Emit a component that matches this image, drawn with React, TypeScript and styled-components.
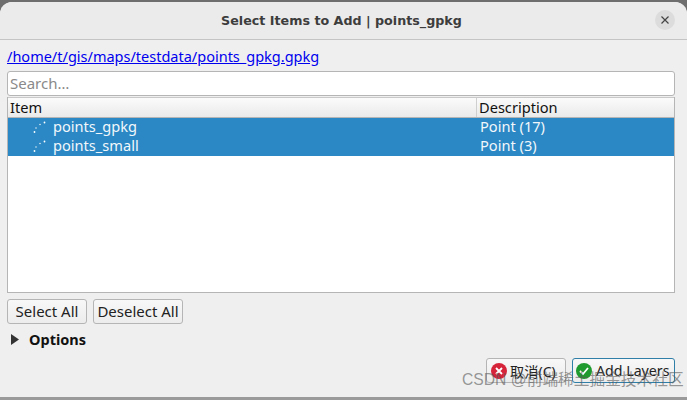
import React from "react";
import styled, { createGlobalStyle } from "styled-components";

const Global = createGlobalStyle`
  html, body { margin: 0; padding: 0; background: #6e6e6e; }
  #root { width: 687px; height: 400px; overflow: hidden; }
`;

const Screen = styled.div`
  position: relative;
  width: 687px;
  height: 400px;
  padding-top: 2px;
  box-sizing: border-box;
  font-family: "Noto Sans", "Noto Sans CJK SC", sans-serif;
  font-size: 14.6px;
  color: #1c1c1c;
  overflow: hidden;
`;

const Window = styled.div`
  width: 687px;
  height: 395px;
  background: #efefef;
  border-radius: 12px 12px 0 0;
  display: flex;
  flex-direction: column;
  box-sizing: border-box;
`;

const TitleBar = styled.div`
  position: relative;
  height: 37px;
  flex: none;
  box-sizing: content-box;
  padding-right: 4px;
  background: #ebebeb;
  border-bottom: 1px solid #c4c4c4;
  border-radius: 12px 12px 0 0;
  display: flex;
  align-items: center;
  justify-content: center;
  font-family: "DejaVu Sans", sans-serif;
  font-size: 12.7px;
  font-weight: 700;
  color: #3d3d3d;
`;

const CloseButton = styled.div`
  position: absolute;
  right: 12px;
  top: 8px;
  width: 20px;
  height: 20px;
  border-radius: 50%;
  background: #dcdcdc;
  display: flex;
  align-items: center;
  justify-content: center;
`;

const Body = styled.div`
  flex: 1;
  display: flex;
  flex-direction: column;
  padding: 6px 12px 0 7px;
`;

const PathLink = styled.a`
  height: 25px;
  flex: none;
  line-height: 21px;
  color: #0000ee;
  text-decoration: underline;
  font-size: 14.5px;
`;

const SearchInput = styled.div`
  height: 25px;
  flex: none;
  box-sizing: border-box;
  background: #fff;
  border: 1px solid #b5b5b5;
  border-radius: 3px;
  padding-left: 2px;
  line-height: 22px;
  color: #8a8a8a;
  font-size: 15px;
`;

const Table = styled.div`
  height: 196px;
  margin-top: 1px;
  flex: none;
  box-sizing: border-box;
  background: #fff;
  border: 1px solid #b5b5b5;
  border-top: none;
  display: flex;
  flex-direction: column;
`;

const Row = styled.div<{ $head?: boolean }>`
  display: grid;
  grid-template-columns: 469px 1fr;
  height: ${(p) => (p.$head ? "21px" : "19px")};
  line-height: ${(p) => (p.$head ? "19px" : "17px")};
  flex: none;
  box-sizing: border-box;
  ${(p) =>
    p.$head
      ? "background: linear-gradient(#fbfbfb, #eaeaea); border-bottom: 1px solid #b5b5b5; border-top: 1px solid #c9c9c9; color: #111;"
      : "background: #2b88c4; color: #f2f7fb; padding-bottom: 2px;"}
`;

const HeadCell = styled.div`
  padding-left: 2px;
  &:first-child { border-right: 1px solid #cfcfcf; }
`;

const ItemCell = styled.div`
  display: flex;
  align-items: center;
  padding-left: 25px;
  gap: 6px;
`;

const DescCell = styled.div`
  padding-left: 3px;
`;

const ButtonRow = styled.div`
  display: flex;
  gap: 6px;
  margin-top: 6px;
`;

const Button = styled.div<{ $w: number }>`
  width: ${(p) => p.$w}px;
  height: 25px;
  box-sizing: border-box;
  padding-bottom: 2px;
  border: 1px solid #b5b5b5;
  border-radius: 3px;
  background: linear-gradient(#f8f8f8, #ececec);
  display: flex;
  align-items: center;
  justify-content: center;
  color: #222;
  font-size: 15px;
  white-space: nowrap;
`;

const DialogButton = styled(Button)<{ $primary?: boolean }>`
  justify-content: flex-start;
  gap: ${(p) => (p.$primary ? "3px" : "2px")};
  padding-left: ${(p) => (p.$primary ? "2px" : "3px")};
  padding-bottom: 0;
  font-size: 14.2px;
  border-color: ${(p) => (p.$primary ? "#2f7fa8" : "#b5b5b5")};
`;

const OptionsRow = styled.div`
  display: flex;
  align-items: center;
  height: 18px;
  margin-top: 6px;
  padding-left: 4px;
  gap: 10px;
  font-weight: 700;
  font-size: 14.5px;
  color: #111;
`;

const Footer = styled.div`
  display: flex;
  justify-content: flex-end;
  gap: 6px;
  margin-top: 10px;
`;

const Watermark = styled.div`
  position: absolute;
  left: 462px;
  top: 369px;
  font-family: "Liberation Sans", "Noto Sans CJK SC", sans-serif;
  font-size: 15.7px;
  line-height: 22px;
  color: rgba(90, 90, 90, 0.62);
  white-space: nowrap;
`;

const BottomEdge = styled.div`
  height: 3px;
  background: #9a9a9a;
`;

const Points = () => (
  <svg width="14" height="14" viewBox="0 0 14 14" fill="#fff">
    <circle cx="1.5" cy="12" r="0.9" />
    <circle cx="3" cy="8" r="0.7" />
    <circle cx="7" cy="4.5" r="0.7" />
    <circle cx="11.5" cy="2.5" r="0.9" />
  </svg>
);

const StatusIcon = ({ color, check }: { color: string; check?: boolean }) => (
  <svg width="18" height="18" viewBox="0 0 18 18">
    <circle cx="9" cy="9" r="8" fill={color} />
    {check ? (
      <path d="M5 9l3 3 5-6" stroke="#fff" strokeWidth="1.8" fill="none" />
    ) : (
      <path d="M6 6l6 6M12 6l-6 6" stroke="#fff" strokeWidth="1.8" fill="none" />
    )}
  </svg>
);

export default function App() {
  return (
    <>
      <Global />
      <Screen>
        <Window>
          <TitleBar>
            Select Items to Add | points_gpkg
            <CloseButton>
              <svg width="10" height="10" viewBox="0 0 10 10">
                <path d="M1.5 1.5l7 7M8.5 1.5l-7 7" stroke="#444" strokeWidth="1.2" fill="none" />
              </svg>
            </CloseButton>
          </TitleBar>
          <Body>
            <PathLink>/home/t/gis/maps/testdata/points_gpkg.gpkg</PathLink>
            <SearchInput>Search…</SearchInput>
            <Table>
              <Row $head>
                <HeadCell>Item</HeadCell>
                <HeadCell>Description</HeadCell>
              </Row>
              <Row>
                <ItemCell><Points />points_gpkg</ItemCell>
                <DescCell>Point (17)</DescCell>
              </Row>
              <Row>
                <ItemCell><Points />points_small</ItemCell>
                <DescCell>Point (3)</DescCell>
              </Row>
            </Table>
            <ButtonRow>
              <Button $w={80}>Select All</Button>
              <Button $w={90}>Deselect All</Button>
            </ButtonRow>
            <OptionsRow>
              <svg width="8" height="11" viewBox="0 0 8 11">
                <path d="M0 0l8 5.5L0 11z" fill="#333" />
              </svg>
              Options
            </OptionsRow>
            <Footer>
              <DialogButton $w={80}><StatusIcon color="#d6243a" />取消(C)</DialogButton>
              <DialogButton $w={103} $primary><StatusIcon color="#1f9a2e" check />Add Layers</DialogButton>
            </Footer>
          </Body>
        </Window>
        <BottomEdge />
        <Watermark>CSDN @前端稀土掘金技术社区</Watermark>
      </Screen>
    </>
  );
}
